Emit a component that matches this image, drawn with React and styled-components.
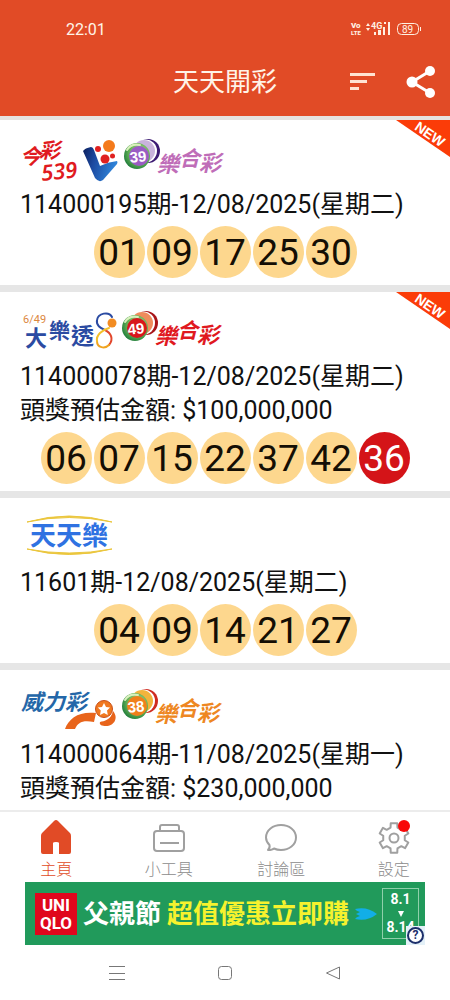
import React from "react";
import styled, { createGlobalStyle } from "styled-components";

const GlobalStyle = createGlobalStyle`
  * {
    box-sizing: border-box;
  }
  body {
    margin: 0;
    background: #fff;
    color: #111;
    font-family: Roboto, "Noto Sans CJK TC", sans-serif;
  }
  button {
    border: 0;
    padding: 0;
    background: none;
    color: inherit;
    font: inherit;
    cursor: pointer;
  }
  svg {
    display: block;
    flex: none;
  }
`;

const Screen = styled.div`
  display: flex;
  flex-direction: column;
  height: 100vh;
`;

const Header = styled.header`
  flex: none;
  background: #e14b26;
  color: #fff4e8;
`;

const StatusBar = styled.div`
  display: flex;
  align-items: center;
  justify-content: space-between;
  height: 48px;
  padding: 10px 28px 0 66px;
  font-size: 16px;
`;

const TitleBar = styled.div`
  display: grid;
  grid-template-columns: 1fr auto 1fr;
  align-items: center;
  height: 68px;
  padding: 0 14px;

  h1 {
    grid-column: 2;
    margin: 0;
    font-size: 26px;
    font-weight: 400;
    line-height: 36px;
  }
`;

const Actions = styled.div`
  display: flex;
  align-items: center;
  justify-content: flex-end;
  gap: 30px;
`;

const List = styled.main`
  flex: 1;
  min-height: 0;
  overflow: hidden;
  border-top: 4px solid #e6e2df;
`;

const Card = styled.article`
  position: relative;
  padding: 18px 20px 7px;
  border-bottom: 7px solid #e6e6e6;
`;

const Logos = styled.div`
  display: flex;
  height: 45px;
  margin-bottom: 5px;

  svg {
    overflow: visible;
  }
`;

const Line = styled.p`
  margin: 0;
  font-size: 25px;
  line-height: 34px;
  white-space: nowrap;
`;

const Balls = styled.ul`
  display: flex;
  justify-content: center;
  gap: 2px;
  margin: 4px 0 0;
  padding: 0;
  list-style: none;
`;

const Ball = styled.li`
  flex: none;
  width: 51px;
  height: 52px;
  border-radius: 50%;
  background: ${(p) => (p.$special ? "#d41418" : "#fdd78e")};
  color: ${(p) => (p.$special ? "#fff" : "#140e04")};
  font-family: Roboto, sans-serif;
  font-size: 37px;
  line-height: 54px;
  text-align: center;
`;

const Ribbon = styled.div`
  position: absolute;
  top: 0;
  right: 0;
`;

const TabBar = styled.nav`
  display: flex;
  flex: none;
  border-top: 2px solid #ececec;
  background: #fff;
`;

const Tab = styled.button`
  display: flex;
  flex: 1;
  flex-direction: column;
  align-items: center;
  gap: 4px;
  height: 70px;
  padding-top: 8px;
  color: ${(p) => (p.$active ? "#e14b26" : "#8c8c8c")};
  font-size: 16px;
  font-weight: 300;
  line-height: 24px;
`;

const Ad = styled.a`
  display: flex;
  flex: none;
  align-items: center;
  align-self: center;
  position: relative;
  width: 400px;
  height: 63px;
  padding: 0 6px 0 10px;
  background: #219a5b;
  color: #fff;
  font-size: 26px;
  font-weight: 700;
  line-height: 36px;
  text-decoration: none;
  white-space: nowrap;
`;

const Brand = styled.span`
  width: 42px;
  height: 42px;
  margin-right: 6px;
  padding-top: 3px;
  background: #e0061c;
  font-size: 17px;
  line-height: 18px;
  text-align: center;
`;

const Offer = styled.span`
  margin: 0 6px;
  color: #f6f22e;
`;

const Dates = styled.span`
  display: flex;
  flex-direction: column;
  align-items: center;
  justify-content: space-between;
  width: 37px;
  height: 51px;
  margin-left: auto;
  padding: 2px 0;
  border: 1px solid #8fd0ab;
  font-size: 14px;
  line-height: 17px;
`;

const AdInfo = styled.span`
  position: absolute;
  right: 0;
  bottom: 0;
  display: flex;
  align-items: center;
  justify-content: center;
  width: 19px;
  height: 19px;
  background: #e4f1f8;

  span {
    width: 17px;
    height: 17px;
    border: 2px solid #1c2f6b;
    border-radius: 50%;
    background: #fff;
    color: #1c2f6b;
    font-size: 12px;
    line-height: 13px;
    text-align: center;
  }
`;

const SystemBar = styled.div`
  display: flex;
  flex: none;
  align-items: center;
  justify-content: center;
  gap: 92px;
  height: 55px;
`;

const cjk = '"Noto Sans CJK TC", sans-serif';

function StatusIcons() {
  return (
    <svg width="72" height="16" viewBox="0 0 72 16" fill="#fff0e2" fontFamily="Roboto, sans-serif" fontWeight="900">
      <text x="1" y="7" fontSize="8">Vo</text>
      <text x="1" y="14" fontSize="6">LTE</text>
      <path d="M16 5l2-3 2 3zM16 7l2 3 2-3z" />
      <text x="21" y="8" fontSize="9" fontWeight="700">4G</text>
      <path d="M24 11h2v3h-2zM28 9h3v5h-3zM33 6h2v8h-2zM34 1h2v2h-2zM38 1h2v13h-2z" />
      <rect x="47.500" y="2.500" width="21" height="11" rx="4" fill="none" stroke="#fff0e2" />
      <path d="M70 6h1v4h-1z" />
      <text x="52" y="12" fontSize="10" fontWeight="400">89</text>
    </svg>
  );
}

function NewRibbon() {
  return (
    <Ribbon>
      <svg width="54" height="37" viewBox="0 0 54 37">
        <path d="M0 0h54v37z" fill="#fb3c08" />
        <text
          x="34"
          y="19"
          transform="rotate(34 34 14)"
          textAnchor="middle"
          fontFamily="Liberation Sans, sans-serif"
          fontWeight="700"
          fontSize="14"
          fill="#fff"
        >
          NEW
        </text>
      </svg>
    </Ribbon>
  );
}

// the numbered ball with 樂合彩 next to it
function Combo({ x, number, core, rim, word }) {
  return (
    <g transform={`translate(${x} 0)`}>
      <circle cx="25" cy="13" r="12" fill={rim[1]} />
      <circle cx="22.500" cy="13" r="11.500" fill="#fff" />
      <circle cx="21" cy="13" r="11" fill={rim[0]} />
      <circle cx="14" cy="18" r="13" fill="url(#green)" />
      <circle cx="16" cy="18" r="10" fill={core} />
      <path d="M4 12C7 7 12 6 17 7" fill="none" stroke="#d9f0bd" strokeWidth="2" strokeLinecap="round" />
      <text
        x="15"
        y="24"
        transform="rotate(-6 15 19)"
        textAnchor="middle"
        fontFamily="Liberation Sans, sans-serif"
        fontWeight="700"
        fontSize="15"
        fill="#fff"
      >
        {number}
      </text>
      <g fill={word} fontFamily={cjk} fontWeight="700" fontStyle="italic" fontSize="22">
        <text x="34" y="34">樂</text>
        <text x="56" y="28" fontSize="21">合</text>
        <text x="76" y="33">彩</text>
      </g>
    </g>
  );
}

function Defs() {
  return (
    <defs>
      <radialGradient id="green" cx="0.6" cy="0.4" r="0.65">
        <stop offset="0" stopColor="#d5ecb5" />
        <stop offset="0.6" stopColor="#67b356" />
        <stop offset="1" stopColor="#1f7c3c" />
      </radialGradient>
      <linearGradient id="navy" x1="0" y1="0" x2="1" y2="0.3">
        <stop offset="0" stopColor="#0b1f5c" />
        <stop offset="0.4" stopColor="#1c49a0" />
        <stop offset="1" stopColor="#2f83d8" />
      </linearGradient>
    </defs>
  );
}

function Logo539() {
  return (
    <svg width="202" height="45" viewBox="0 0 202 45">
      <Defs />
      <g fill="#e01a20" fontFamily={cjk} fontWeight="700" fontStyle="italic">
        <text x="0" y="26" fontSize="21">今</text>
        <text x="19" y="20" fontSize="21">彩</text>
        <text x="22" y="43" fontSize="22" fontWeight="600" fontFamily="Noto Sans, sans-serif" transform="rotate(-6 22 43)">
          539
        </text>
      </g>
      <path d="M63 13Q65 10 71 9Q73 9 74 12L80 28Q88 24 97 23Q98 24 97 26L83 42Q79 45 75 40Z" fill="url(#navy)" />
      <circle cx="89" cy="8" r="6" fill="#f47a1c" />
      <circle cx="78" cy="11" r="3" fill="#e02020" />
      <circle cx="85" cy="21" r="4.500" fill="#e02020" />
      <circle cx="92.500" cy="18" r="2.500" fill="#e02020" />
      <Combo x={103} number="39" core="#9a5cc4" rim={["#c9b3dc", "#3c1a72"]} word="#bf6db8" />
    </svg>
  );
}

function Logo649() {
  return (
    <svg width="202" height="45" viewBox="0 0 202 45">
      <text x="3" y="13" fontFamily="Roboto, sans-serif" fontSize="11" fill="#dc8740">6/49</text>
      <g fill="#2b4ba2" fontFamily={cjk} fontWeight="700">
        <text x="5" y="36" fontSize="22">大</text>
        <text x="29" y="28" fontSize="21">樂</text>
        <text x="51" y="34" fontSize="23">透</text>
      </g>
      <g fill="none" strokeWidth="2" strokeLinecap="round">
        <path d="M92 7C89 1 78 3 77 10C76 16 81 18 85 20" stroke="#2b4ba2" />
        <path d="M85 20C91 23 94 29 89 35" stroke="#e2472c" />
        <path d="M89 35C85 39 77 38 77 31" stroke="#f0a420" />
        <path d="M77 31C76 25 82 20 89 18" stroke="#f3c02b" />
      </g>
      <circle cx="92" cy="13" r="4.500" fill="#f28c22" />
      <Combo x={101} number="49" core="#d8161c" rim={["#f08c5c", "#a81418"]} word="#e0191f" />
    </svg>
  );
}

function LogoDaily() {
  return (
    <svg width="100" height="45" viewBox="0 0 100 45">
      <path d="M7 6Q49 -6 92 6Q49 -3 7 6Z" fill="#ebc63c" stroke="#ebc63c" />
      <path d="M7 33Q49 44 92 33Q49 41 7 33Z" fill="#ebc63c" stroke="#ebc63c" />
      <text x="10" y="29" fontFamily={cjk} fontWeight="700" fontSize="26" fill="#2f72e2">
        天天樂
      </text>
    </svg>
  );
}

function LogoPower() {
  return (
    <svg width="202" height="45" viewBox="0 0 202 45">
      <text x="1" y="22" fontFamily={cjk} fontWeight="700" fontStyle="italic" fontSize="22" fill="#2467a8">
        威力彩
      </text>
      <path d="M45 41C49 30 59 23 76 25L74 34C63 32 58 34 55 41Z" fill="#e8641b" />
      <path d="M93 23C99 30 94 38 86 38C82 38 79 37 80 34C84 33 91 32 93 23Z" fill="#e8641b" />
      <circle cx="84" cy="21" r="8.500" fill="#f0781f" stroke="#c9501a" />
      <path d="M84 15l2 4 4 .5-3 3 .8 4.500-3.800-2-4 2 .8-4.500-3-3 4.200-.5z" fill="#fff" />
      <Combo x={101} number="38" core="#f0801c" rim={["#f2b43c", "#cf2b20"]} word="#ee8722" />
    </svg>
  );
}

const HomeIcon = () => (
  <svg width="34" height="34" viewBox="0 0 34 34">
    <path d="M17 0q1 0 2 1l12 12q1 1 1 3v16q0 2-2 2H20V23q0-1-3-1t-3 1v11H4q-2 0-2-2V16q0-2 1-3L15 1q1-1 2-1z" fill="#e14b26" />
  </svg>
);

const ToolIcon = () => (
  <svg width="34" height="34" viewBox="0 0 34 34" fill="none" stroke="#a0a0a0" strokeWidth="2">
    <path d="M8 11V7q0-2 2-2h15q2 0 2 2v4" />
    <rect x="2" y="11" width="30" height="20" rx="3" />
    <path d="M8 23h19" />
  </svg>
);

const ChatIcon = () => (
  <svg width="34" height="34" viewBox="0 0 34 34" fill="none" stroke="#a0a0a0" strokeWidth="2" strokeLinejoin="round">
    <path d="M17 5C25 5 32 10 32 17.500S25 30 17 30c-3 0-5-.5-7-1.500-1 1-3 1.500-6 1.500 1-1 2-3 1.500-5C3 22.500 2 20 2 17.500 2 10 9 5 17 5z" />
  </svg>
);

// six teeth, the first one pointing straight down
const gear = Array.from({ length: 6 }, (_, i) => {
  const mid = Math.PI / 2 + (i * Math.PI) / 3;
  return [[-0.32, 11], [-0.22, 15], [0.22, 15], [0.32, 11]]
    .map(([a, r]) => `${17 + r * Math.cos(mid + a)} ${18 + r * Math.sin(mid + a)}`)
    .join("L");
}).join("L");

const GearIcon = () => (
  <svg width="34" height="34" viewBox="0 0 34 34" fill="none" stroke="#a0a0a0" strokeWidth="2" strokeLinejoin="round">
    <path d={`M${gear}Z`} />
    <circle cx="17" cy="18" r="4.500" />
    <circle cx="27" cy="6" r="6" fill="#f80808" stroke="none" />
  </svg>
);

const draws = [
  { id: "539", Logo: Logo539, term: "114000195期-12/08/2025(星期二)", numbers: ["01", "09", "17", "25", "30"], isNew: true },
  {
    id: "649",
    Logo: Logo649,
    term: "114000078期-12/08/2025(星期二)",
    jackpot: "$100,000,000",
    numbers: ["06", "07", "15", "22", "37", "42"],
    special: "36",
    isNew: true,
  },
  { id: "daily", Logo: LogoDaily, term: "11601期-12/08/2025(星期二)", numbers: ["04", "09", "14", "21", "27"] },
  { id: "power", Logo: LogoPower, term: "114000064期-11/08/2025(星期一)", jackpot: "$230,000,000", numbers: [] },
];

const tabs = [
  { label: "主頁", Icon: HomeIcon, active: true },
  { label: "小工具", Icon: ToolIcon },
  { label: "討論區", Icon: ChatIcon },
  { label: "設定", Icon: GearIcon },
];

export default function App() {
  return (
    <Screen>
      <GlobalStyle />
      <Header>
        <StatusBar>
          <span>22:01</span>
          <StatusIcons />
        </StatusBar>
        <TitleBar>
          <h1>天天開彩</h1>
          <Actions>
            <button aria-label="排序">
              <svg width="26" height="18" viewBox="0 0 26 18" fill="#ffe3d2">
                <path d="M0 0h25v3H0zM0 7h17v3H0zM0 14h9v3H0z" />
              </svg>
            </button>
            <button aria-label="分享">
              <svg width="30" height="34" viewBox="0 0 30 34" fill="#fff">
                <path d="M24 6L6 17l18 11" fill="none" stroke="#fff" strokeWidth="3" />
                <circle cx="24" cy="6" r="5" />
                <circle cx="6" cy="17" r="5.500" />
                <circle cx="24" cy="28" r="5" />
              </svg>
            </button>
          </Actions>
        </TitleBar>
      </Header>
      <List>
        {draws.map(({ id, Logo, term, jackpot, numbers, special, isNew }) => (
          <Card key={id}>
            {isNew && <NewRibbon />}
            <Logos>
              <Logo />
            </Logos>
            <Line>{term}</Line>
            {jackpot && <Line>頭獎預估金額: {jackpot}</Line>}
            {numbers.length > 0 && (
              <Balls>
                {numbers.map((n) => (
                  <Ball key={n}>{n}</Ball>
                ))}
                {special && <Ball $special>{special}</Ball>}
              </Balls>
            )}
          </Card>
        ))}
      </List>
      <TabBar>
        {tabs.map(({ label, Icon, active }) => (
          <Tab key={label} $active={active}>
            <Icon />
            {label}
          </Tab>
        ))}
      </TabBar>
      <Ad href="#">
        <Brand>
          UNI
          <br />
          QLO
        </Brand>
        父親節
        <Offer>超值優惠立即購</Offer>
        <svg width="22" height="14" viewBox="0 0 22 14">
          <path d="M0 2Q12 -1 22 7Q12 15 0 12Q1 10 5 9L1 7L5 5Q1 4 0 2Z" fill="#12aee6" />
        </svg>
        <Dates>
          <span>8.1</span>
          <svg width="6" height="6" viewBox="0 0 6 6">
            <path d="M0 0h6L3 6z" fill="#fff" />
          </svg>
          <span>8.14</span>
        </Dates>
        <AdInfo>
          <span>?</span>
        </AdInfo>
      </Ad>
      <SystemBar>
        <button aria-label="選單">
          <svg width="16" height="16" viewBox="0 0 16 16" stroke="#777">
            <path d="M0 1.500h16M0 8.500h16M0 14.500h16" />
          </svg>
        </button>
        <button aria-label="主畫面">
          <svg width="16" height="16" viewBox="0 0 16 16" fill="none" stroke="#777">
            <rect x="1.500" y="1.500" width="13" height="13" rx="3" />
          </svg>
        </button>
        <button aria-label="返回">
          <svg width="16" height="16" viewBox="0 0 16 16" fill="none" stroke="#777" strokeLinejoin="round">
            <path d="M14.500 2v12L1.500 8z" />
          </svg>
        </button>
      </SystemBar>
    </Screen>
  );
}
